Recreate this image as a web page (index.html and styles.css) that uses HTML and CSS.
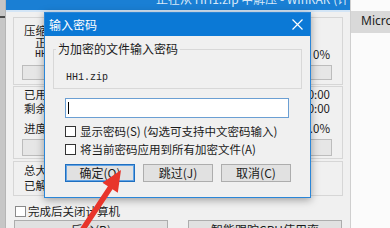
FILE: index.html
```html
<!DOCTYPE html>
<html>
<head>
<meta charset="utf-8">
<link rel="stylesheet" href="styles.css">
</head>
<body>
<div class="screen">
  <div class="edge"><span class="edge-mark"></span></div>
  <div class="mainwin">
    <div class="main-title"><span class="main-title-text">正在从 HH1.zip 中解压 - WinRAR (评估版本)</span></div>
    <div class="main-body">
      <div class="grp grp1">
        <div class="line">压缩文件 C:\Users\Desktop\HH1.zip</div>
        <div class="line indent">正在解压</div>
        <div class="row indent"><span class="mono">HH1.zip</span><span class="val">0%</span></div>
        <div class="bar"></div>
      </div>
      <div class="grp grp2">
        <div class="row"><span>已用时间</span><span class="val">00:00:00</span></div>
        <div class="row"><span>剩余时间</span><span class="val">00:00:00</span></div>
        <div class="row row-gap"><span>进度</span><span class="val">0.0%</span></div>
        <div class="bar bar2"></div>
      </div>
      <div class="grp grp3">
        <div class="row"><span>总大小</span></div>
        <div class="row"><span>已解压</span></div>
      </div>
      <div class="chk-row main-chk"><span class="box"></span><span>完成后关闭计算机</span></div>
      <div class="btn-row">
        <div class="wbtn">后台(B)</div>
        <div class="wbtn">智能跟踪CPU使用率</div>
      </div>
    </div>
  </div>
  <div class="side"><div class="side-bar">Microsoft</div></div>
</div>

<div class="dialog">
  <div class="dlg-title">
    <span>输入密码</span>
    <svg class="close" width="11" height="11" viewBox="0 0 11 11"><path d="M0.5 0.5 L10.5 10.5 M10.5 0.5 L0.5 10.5" stroke="#fff" stroke-width="1.2" fill="none"/></svg>
  </div>
  <div class="dlg-body">
    <fieldset class="fs">
      <legend>为加密的文件输入密码</legend>
      <div class="fname">HH1.zip</div>
    </fieldset>
    <div class="dlg-main">
      <div class="pwd"><span class="caret"></span></div>
      <div class="chk-row dlg-chk first"><span class="box"></span><span>显示密码(S) (勾选可支持中文密码输入)</span></div>
      <div class="chk-row dlg-chk"><span class="box"></span><span>将当前密码应用到所有加密文件(A)</span></div>
      <div class="dlg-btns">
        <div class="btn default">确定(O)</div>
        <div class="btn">跳过(J)</div>
        <div class="btn">取消(C)</div>
      </div>
    </div>
  </div>
</div>

<svg class="arrow" width="390" height="228" viewBox="0 0 390 228">
  <polygon points="121,170 117.8,192.7 112.5,189.2 81.3,236.5 76.7,233.5 107.9,186.2 102.5,182.7" fill="#e8352b"/>
</svg>
</body>
</html>
```

FILE: styles.css
```css
html, body {
  margin: 0;
  padding: 0;
}

body {
  width: 390px;
  height: 228px;
  overflow: hidden;
  position: relative;
  background: #fdfdfd;
  font-family: "Noto Sans CJK SC", "Noto Sans", sans-serif;
  font-size: 12px;
  color: #1a1a1a;
}

.screen {
  display: flex;
  height: 228px;
  overflow: hidden;
}

.edge {
  width: 5px;
  background: #c6c6c6;
  display: flex;
  flex-direction: column;
}

.edge-mark {
  display: block;
  margin-top: 16px;
  width: 5px;
  height: 2px;
  background: #4a4a4a;
}

.mainwin {
  width: 346px;
  box-sizing: border-box;
  display: flex;
  flex-direction: column;
  border-left: 1px solid #b5b5b5;
  border-right: 1px solid #cfcfcf;
}

.main-title {
  height: 10px;
  flex: none;
  display: flex;
  background: #1a7fd4;
  border-bottom: 2px solid #d3e5f6;
  overflow: hidden;
  padding-left: 150px;
}

.main-title-text {
  display: block;
  margin-top: -9px;
  line-height: 16px;
  font-size: 12px;
  color: #d9e9f8;
  white-space: nowrap;
}

.main-body {
  flex: 1;
  background: #f0f0f0;
  padding: 5px 7px 0 7px;
  display: flex;
  flex-direction: column;
  font-size: 11.5px;
}

.grp {
  border: 1px solid #d6d6d6;
  padding: 0 10px 0 8px;
}

.grp1 {
  padding-top: 6px;
  padding-bottom: 4px;
}

.grp2 {
  margin-top: 1px;
  padding-bottom: 2px;
}

.grp3 {
  margin-top: 2px;
  padding-top: 1px;
  padding-bottom: 3px;
}

.line {
  line-height: 12px;
  white-space: nowrap;
  padding-left: 2px;
}

.indent {
  padding-left: 13px;
}

.row {
  display: flex;
  justify-content: space-between;
  line-height: 14px;
  white-space: nowrap;
  padding-left: 2px;
}

.grp1 .row {
  line-height: 13px;
  padding-left: 13px;
}

.grp3 .row + .row {
  margin-top: 1px;
}

.row-gap {
  margin-top: 6px;
}

.val {
  margin-right: 2px;
}

.mono {
  font-family: "Liberation Mono", monospace;
  font-size: 10px;
}

.bar {
  box-sizing: border-box;
  height: 15px;
  margin-top: 4px;
  border: 1px solid #bcbcbc;
  background: #e6e6e6;
}

.bar2 {
  height: 17px;
}

.chk-row {
  display: flex;
  align-items: center;
  white-space: nowrap;
}

.main-chk {
  margin-top: 8px;
  height: 14px;
  padding-left: 2px;
  gap: 2px;
  color: #222;
}

.box {
  display: block;
  box-sizing: border-box;
  width: 11px;
  height: 11px;
  border: 1px solid #333;
  background: #fff;
  flex: none;
}

.main-chk .box {
  border-color: #8a8a8a;
}

.btn-row {
  margin-top: 2px;
  display: flex;
  gap: 20px;
  padding-left: 1px;
}

.wbtn {
  box-sizing: border-box;
  width: 154px;
  height: 20px;
  border: 1px solid #adadad;
  background: #e1e1e1;
  text-align: center;
  line-height: 18px;
  font-size: 12px;
}

.side {
  flex: 1;
  background: #fbfbfb;
}

.side-bar {
  margin-top: 11px;
  height: 22px;
  background: #d9d9d9;
  padding-left: 10px;
  line-height: 20px;
  font-family: "Noto Sans", sans-serif;
  font-size: 12px;
  color: #222;
  white-space: nowrap;
  overflow: hidden;
}

/* dialog */
.dialog {
  position: absolute;
  left: 44px;
  top: 12px;
  width: 267px;
  height: 186px;
  box-sizing: border-box;
  border: 1px solid #2a86d8;
  background: #f0f0f0;
  box-shadow: 0 2px 8px rgba(0, 0, 0, 0.35);
  display: flex;
  flex-direction: column;
}

.dlg-title {
  height: 23px;
  background: #0b79d6;
  color: #fff;
  display: flex;
  align-items: center;
  justify-content: space-between;
  padding: 0 7px 0 4px;
  font-size: 12px;
  flex: none;
}

.close {
  display: block;
}

.dlg-body {
  padding: 5px 8px 0 8px;
}

.fs {
  margin: 0;
  border: 1px solid #d8d8d8;
  padding: 0 2px 3px 2px;
}

.fs legend {
  padding: 0 2px;
  line-height: 16px;
  font-size: 12px;
  color: #1a1a1a;
}

.fname {
  margin-top: 14px;
  margin-left: 10px;
  line-height: 14px;
  font-family: "Liberation Mono", monospace;
  font-size: 10px;
  color: #222;
}

.dlg-main {
  padding-left: 12px;
}

.pwd {
  box-sizing: border-box;
  margin-top: 9px;
  width: 224px;
  height: 20px;
  border: 1px solid #6b9fd3;
  background: #fff;
  display: flex;
  align-items: center;
  padding-left: 2px;
}

.caret {
  display: block;
  width: 1px;
  height: 12px;
  background: #000;
}

.dlg-chk {
  height: 16px;
  gap: 4px;
  margin-top: 2px;
  font-size: 11.5px;
}

.dlg-chk.first {
  margin-top: 5px;
}

.dlg-btns {
  margin-top: 7px;
  display: flex;
  gap: 8px;
}

.btn {
  box-sizing: border-box;
  width: 70px;
  height: 18px;
  border: 1px solid #adadad;
  background: #e1e1e1;
  text-align: center;
  line-height: 16px;
  font-size: 12px;
}

.btn.default {
  border-color: #1f6fc0;
  box-shadow: inset 0 0 0 1px #62a3e4;
}

.arrow {
  position: absolute;
  left: 0;
  top: 0;
}
```
